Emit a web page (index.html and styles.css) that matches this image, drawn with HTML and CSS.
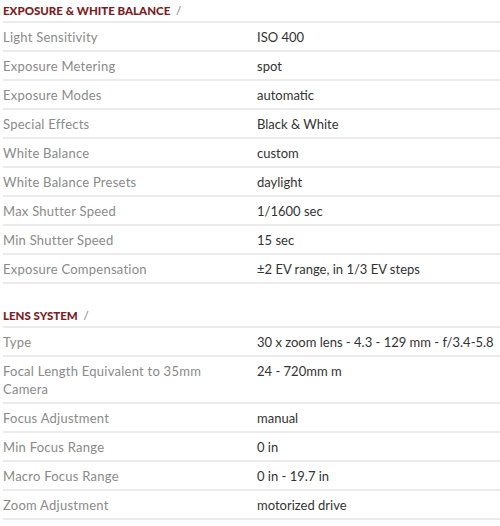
FILE: index.html
```html
<!DOCTYPE html>
<html>
<head>
<meta charset="utf-8">
<link rel="stylesheet" href="styles.css">
</head>
<body>
<div class="specs">
  <section class="group">
    <h3 class="group-title">EXPOSURE &amp; WHITE BALANCE <span class="slash">/</span></h3>
    <div class="row"><div class="label">Light Sensitivity</div><div class="value">ISO 400</div></div>
    <div class="row"><div class="label">Exposure Metering</div><div class="value">spot</div></div>
    <div class="row"><div class="label">Exposure Modes</div><div class="value">automatic</div></div>
    <div class="row"><div class="label">Special Effects</div><div class="value">Black &amp; White</div></div>
    <div class="row"><div class="label">White Balance</div><div class="value">custom</div></div>
    <div class="row"><div class="label">White Balance Presets</div><div class="value">daylight</div></div>
    <div class="row"><div class="label">Max Shutter Speed</div><div class="value">1/1600 sec</div></div>
    <div class="row"><div class="label">Min Shutter Speed</div><div class="value">15 sec</div></div>
    <div class="row"><div class="label">Exposure Compensation</div><div class="value">±2 EV range, in 1/3 EV steps</div></div>
  </section>
  <section class="group">
    <h3 class="group-title">LENS SYSTEM <span class="slash">/</span></h3>
    <div class="row"><div class="label">Type</div><div class="value">30 x zoom lens - 4.3 - 129 mm - f/3.4-5.8</div></div>
    <div class="row"><div class="label">Focal Length Equivalent to 35mm Camera</div><div class="value">24 - 720mm m</div></div>
    <div class="row"><div class="label">Focus Adjustment</div><div class="value">manual</div></div>
    <div class="row"><div class="label">Min Focus Range</div><div class="value">0 in</div></div>
    <div class="row"><div class="label">Macro Focus Range</div><div class="value">0 in - 19.7 in</div></div>
    <div class="row"><div class="label">Zoom Adjustment</div><div class="value">motorized drive</div></div>
  </section>
</div>
</body>
</html>
```
FILE: styles.css
```css
html, body {
  margin: 0;
  padding: 0;
  background: #fff;
}
body {
  padding-left: 3px;
  font-family: Lato, "Open Sans", sans-serif;
  font-size: 13px;
}
.specs {
  display: flex;
  flex-direction: column;
  gap: 21px;
}
.group-title {
  margin: 0;
  height: 21px;
  line-height: 21px;
  font-size: 11.5px;
  font-weight: 900;
  color: #7b1c25;
  border-bottom: 2px solid #ebebeb;
}
.slash {
  color: #777;
  font-weight: 400;
  margin-left: 3px;
}
.row {
  display: grid;
  grid-template-columns: 254px 1fr;
  padding: 5px 0 4px;
  line-height: 18px;
  border-bottom: 2px solid #ebebeb;
}
.label {
  color: #8a8a8a;
  letter-spacing: 0.25px;
  padding-right: 30px;
}
.value {
  color: #333;
}
```
